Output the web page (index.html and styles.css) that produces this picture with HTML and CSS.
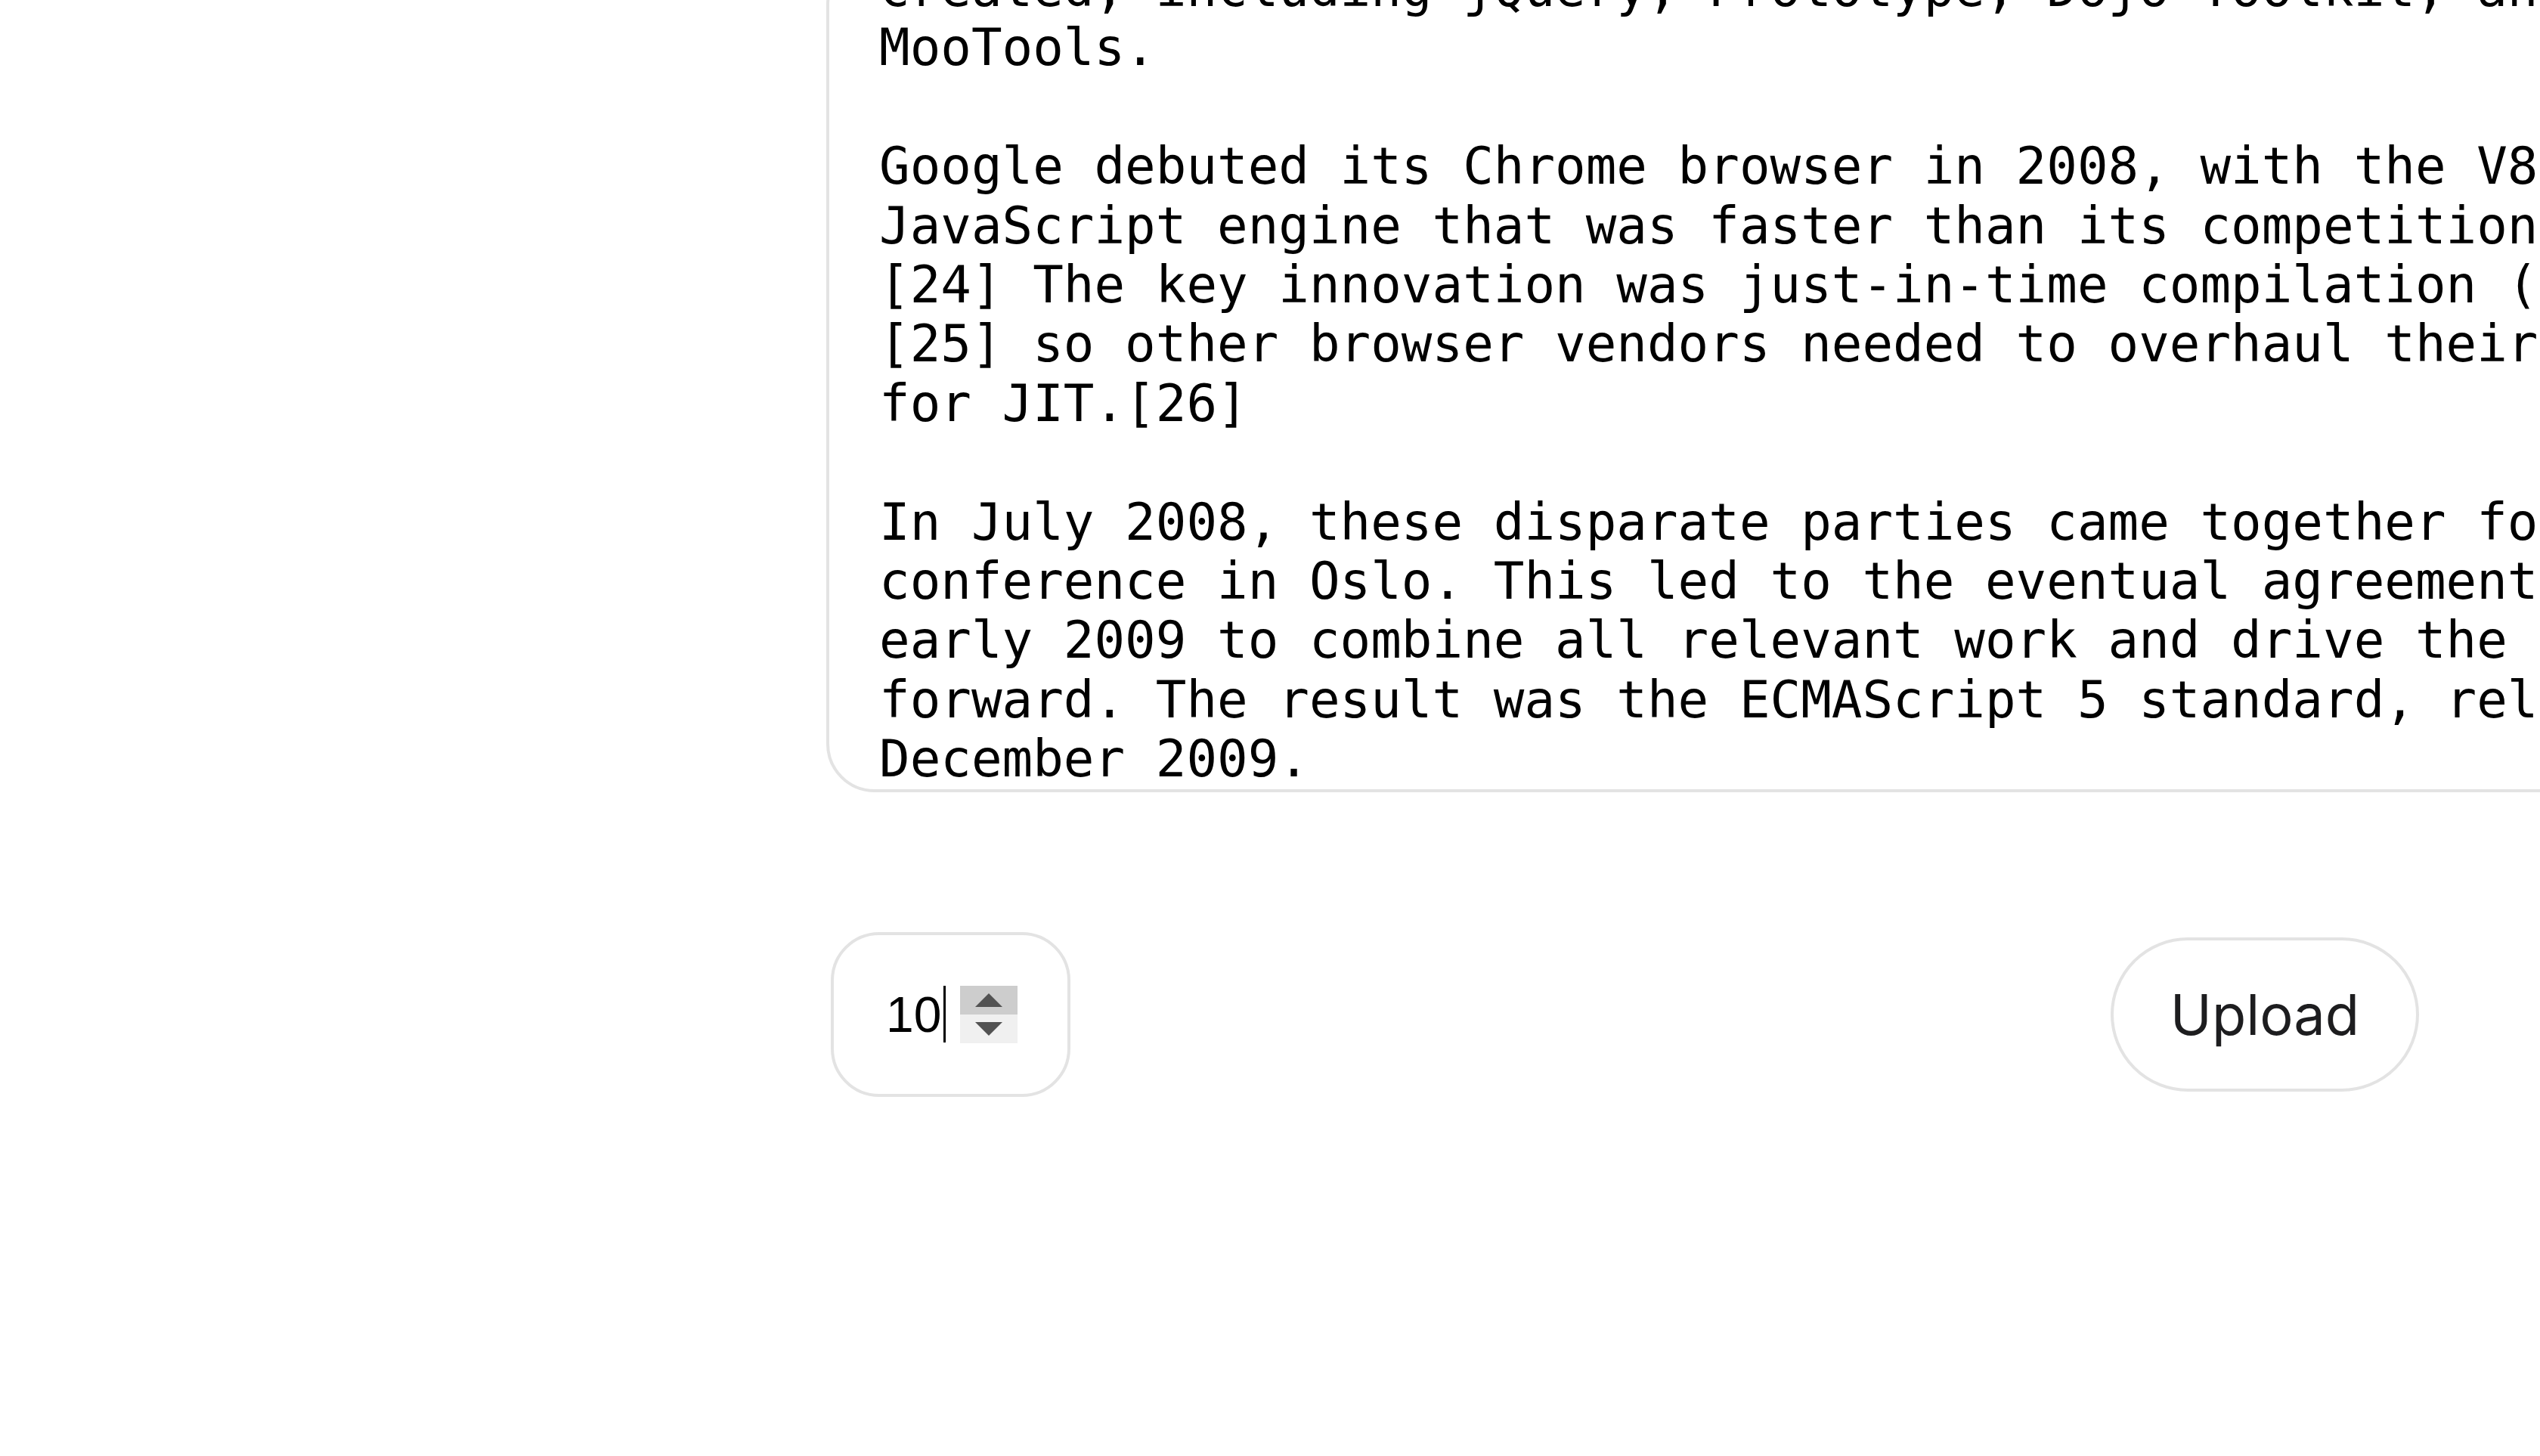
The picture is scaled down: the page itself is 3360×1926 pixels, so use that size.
FILE: index.html
```html
<!DOCTYPE html>
<html lang="en">
<head>
<meta charset="utf-8">
<title>Editor</title>
<link rel="stylesheet" href="styles.css">
</head>
<body>
<div class="page">
  <div class="editor">
    <div class="editor-text">created, including jQuery, Prototype, Dojo Toolkit, and
MooTools.

Google debuted its Chrome browser in 2008, with the V8
JavaScript engine that was faster than its competition.
[24] The key innovation was just-in-time compilation (JIT),
[25] so other browser vendors needed to overhaul their engines
for JIT.[26]

In July 2008, these disparate parties came together for a
conference in Oslo. This led to the eventual agreement in
early 2009 to combine all relevant work and drive the language
forward. The result was the ECMAScript 5 standard, released in
December 2009.</div>
  </div>
  <div class="controls">
    <div class="number-field">
      <span class="number-value">10</span><span class="caret"></span>
      <span class="spinner">
        <span class="spin spin-up"><svg class="arrow" viewBox="0 0 36 18" width="36" height="18"><polygon points="18,0 36,18 0,18"/></svg></span>
        <span class="spin spin-down"><svg class="arrow" viewBox="0 0 36 18" width="36" height="18"><polygon points="0,0 36,0 18,18"/></svg></span>
      </span>
    </div>
    <button class="upload">Upload</button>
  </div>
</div>
</body>
</html>
```

FILE: styles.css
```css
html, body {
  margin: 0;
  padding: 0;
  background: #ffffff;
  overflow: hidden;
}

.page {
  padding-left: 1093px;
}

.editor {
  box-sizing: border-box;
  width: 2600px;
  margin-top: -58px;
  border: 4px solid #e3e3e3;
  border-radius: 64px;
  padding: 0 0 0 66px;
  background: #ffffff;
}

.editor-text {
  font-family: "DejaVu Sans Mono", monospace;
  font-size: 67.5px;
  line-height: 78.4px;
  white-space: pre;
  color: #000000;
}

.controls {
  box-sizing: border-box;
  width: 2107px;
  margin-top: 185px;
  padding-left: 6px;
  display: flex;
  align-items: center;
  justify-content: space-between;
}

.number-field {
  box-sizing: border-box;
  width: 317px;
  height: 218px;
  border: 4px solid #e3e3e3;
  border-radius: 64px;
  display: flex;
  align-items: center;
  padding-left: 69px;
  background: #ffffff;
}

.number-value {
  font-family: "Liberation Sans", Arial, sans-serif;
  font-size: 66px;
  line-height: 1;
  color: #000000;
}

.caret {
  display: block;
  width: 3px;
  height: 75px;
  margin-left: 3px;
  background: #000000;
}

.spinner {
  display: flex;
  flex-direction: column;
  width: 76px;
  height: 76px;
  margin-left: 19px;
}

.spin {
  flex: 1;
  display: flex;
  align-items: center;
  justify-content: center;
}

.spin-up {
  background: #cdcdcd;
}

.spin-down {
  background: #f0f0f0;
}

.arrow {
  display: block;
  fill: #525252;
}

.upload {
  box-sizing: border-box;
  width: 408px;
  height: 204px;
  padding: 0;
  border: 4px solid #e3e3e3;
  border-radius: 102px;
  background: #ffffff;
  font-family: "Inter", "Liberation Sans", sans-serif;
  font-size: 74px;
  color: #1d1d1f;
  cursor: pointer;
}
```
